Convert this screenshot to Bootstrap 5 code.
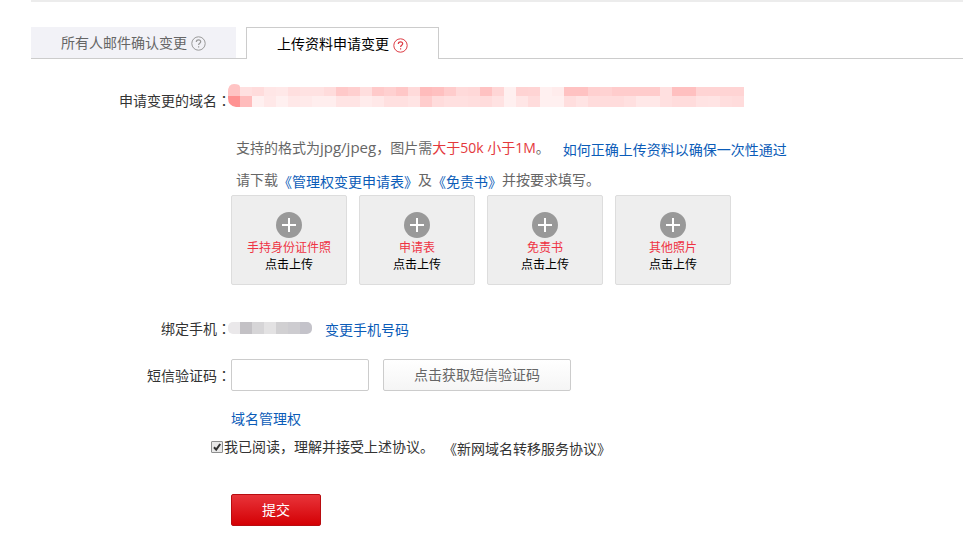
<!DOCTYPE html>
<html lang="zh-CN">
<head>
<meta charset="utf-8">
<meta name="viewport" content="width=device-width, initial-scale=1">
<title>域名管理权变更</title>
<link href="https://cdn.jsdelivr.net/npm/bootstrap@5.3.0/dist/css/bootstrap.min.css" rel="stylesheet">
<style>
  body { font-family: "Open Sans", "Noto Sans CJK SC", sans-serif; font-size: 14px; line-height: 20px; color: #333; background: #fff; }
  .page { margin-left: 31px; border-top: 2px solid #ececec; padding-top: 25px; }
  .mode-tabs { border-bottom: 1px solid #ccc; gap: 10px; }
  .mode-tabs .nav-link { height: 31px; padding: 0 30px; border: 0; border-radius: 0; color: #666; background: #f2f2f7; gap: 4px; }
  .mode-tabs .nav-link.active { color: #000; background: #fff; border: 1px solid #ccc; border-bottom: 0; height: 32px; margin-bottom: -1px; padding-top: 1px; }
  .mode-tabs .nav-link.active svg { color: #dd3c45; }
  .mode-tabs svg { color: #999; margin-top: 2px; }
  .domain-row { margin-top: 25px; }
  .files-row { margin-top: 26px; }
  .phone-row { margin-top: 31px; }
  .sms-row { margin-top: 19px; }
  .rights-row { margin-top: 16px; }
  .agree-row { margin-top: 6px; margin-left: 180px; gap: 1px; }
  .submit-row { margin-top: 35px; }
  .field-label { width: 200px; flex: none; text-align: right; }
  .colon { font-family: "Noto Sans CJK TC", sans-serif; }
  a.doc { color: #0b5cb8; text-decoration: none; vertical-align: -2px; }
  a.doc.plain { color: #333; }
  .guide { margin-left: 13px; }
  .hint { color: #666; padding-left: 5px; margin-bottom: 10px; }
  .formats { font-size: 15px; }
  .hot { color: #e4393c; }
  .masked { margin-left: -3px; }
  .uploads { gap: 12px; margin-top: -7px; }
  .upload { width: 116px; height: 90px; padding: 16px 0 0; border: 1px solid #ddd; border-radius: 2px; background: #eee; font-size: 12px; line-height: 17px; color: #000; }
  .upload svg { margin-bottom: 1px; }
  .upload .hot { color: #ee3344; }
  .sms-input { width: 138px; height: 32px; border: 1px solid #ccc; border-radius: 2px; padding: 4px 8px; font-size: 14px; }
  .sms-btn { width: 188px; height: 32px; margin-left: 14px; padding: 0; border: 1px solid #ccc; border-radius: 2px; background: linear-gradient(#fff, #f5f5f5); color: #666; font-size: 14px; line-height: 20px; }
  .offset-field { margin-left: 200px; }
  .agree-box { appearance: none; width: 12px; height: 12px; margin: 0; border: 1px solid #8e8f8f; background: #e9e9e9 url("data:image/svg+xml,%3Csvg xmlns='http://www.w3.org/2000/svg' viewBox='0 0 10 10'%3E%3Cpath d='M2 5.2 4.2 7.6 8.2 2' fill='none' stroke='%23333' stroke-width='2'/%3E%3C/svg%3E") center / 10px no-repeat; border-radius: 1px; }
  .submit-btn { width: 90px; height: 32px; padding: 0; border: 1px solid #b80c10; border-radius: 2px; background: linear-gradient(#e8343a, #d40004); color: #fff; font-size: 14px; line-height: 20px; }
</style>
</head>
<body>
<svg class="d-none" xmlns="http://www.w3.org/2000/svg">
  <symbol id="help" viewBox="0 0 15 15"><circle cx="7.5" cy="7.5" r="6.7" fill="none" stroke="currentColor"/><path d="M5.3 5.9c0-1.4 1-2.1 2.2-2.1s2.2.7 2.2 1.9c0 1.500-2.100 1.600-2.100 3.200M7.600 10.200v1.400" fill="none" stroke="currentColor" stroke-width="1.200"/></symbol>
  <symbol id="plus" viewBox="0 0 26 26"><circle cx="13" cy="13" r="13" fill="#999"/><path d="M13 6v14M6 13h14" stroke="#fff" stroke-width="2"/></symbol>
</svg>
<main class="page">
  <ul class="nav mode-tabs align-items-end">
    <li class="nav-item"><button type="button" class="nav-link d-flex align-items-center">所有人邮件确认变更<svg width="15" height="15" aria-hidden="true"><use href="#help"/></svg></button></li>
    <li class="nav-item"><button type="button" class="nav-link active d-flex align-items-center">上传资料申请变更<svg width="15" height="15" aria-hidden="true"><use href="#help"/></svg></button></li>
  </ul>

  <form>
    <div class="domain-row d-flex align-items-end">
      <span class="field-label">申请变更的域名<span class="colon" lang="zh-TW">：</span></span>
      <svg id="domainMask" class="masked" width="516" height="27" shape-rendering="crispEdges" role="img" aria-label="已隐藏的域名"><defs><clipPath id="domainClip"><path d="M0 8Q0 0 6 0T12 3H516V23H8Q0 22 0 14Z"/></clipPath></defs><g clip-path="url(#domainClip)"></g></svg>
    </div>

    <div class="files-row offset-field">
      <p class="hint">支持的格式为<span class="formats">jpg/jpeg</span>，图片需<span class="hot">大于50k 小于1M</span>。<a class="doc guide" href="#">如何正确上传资料以确保一次性通过</a></p>
      <p class="hint">请下载<a class="doc" href="#">《管理权变更申请表》</a>及<a class="doc" href="#">《免责书》</a>并按要求填写。</p>
      <div class="d-flex flex-wrap uploads">
        <button type="button" class="upload d-flex flex-column align-items-center"><svg width="26" height="26" aria-hidden="true"><use href="#plus"/></svg><span class="hot">手持身份证件照</span><span>点击上传</span></button>
        <button type="button" class="upload d-flex flex-column align-items-center"><svg width="26" height="26" aria-hidden="true"><use href="#plus"/></svg><span class="hot">申请表</span><span>点击上传</span></button>
        <button type="button" class="upload d-flex flex-column align-items-center"><svg width="26" height="26" aria-hidden="true"><use href="#plus"/></svg><span class="hot">免责书</span><span>点击上传</span></button>
        <button type="button" class="upload d-flex flex-column align-items-center"><svg width="26" height="26" aria-hidden="true"><use href="#plus"/></svg><span class="hot">其他照片</span><span>点击上传</span></button>
      </div>
    </div>

    <div class="phone-row d-flex align-items-center">
      <span class="field-label">绑定手机<span class="colon" lang="zh-TW">：</span></span>
      <svg class="masked" width="84" height="14" shape-rendering="crispEdges" role="img" aria-label="已隐藏的手机号"><defs><clipPath id="phoneClip"><rect y="1" width="84" height="12" rx="5"/></clipPath></defs><g clip-path="url(#phoneClip)"><path fill="#eae8ea" d="M0 0h12v14H0z"/><path fill="#c3c1c5" d="M12 0h12v14H12z"/><path fill="#d6d5d7" d="M24 0h12v14H24z"/><path fill="#e3e2e3" d="M36 0h12v14H36z"/><path fill="#d1d0d2" d="M48 0h12v14H48z"/><path fill="#cdccd0" d="M60 0h12v14H60z"/><path fill="#c4c3ca" d="M72 0h12v14H72z"/></g></svg>
      <a class="doc guide pt-1" href="#">变更手机号码</a>
    </div>

    <div class="sms-row d-flex align-items-center">
      <label class="field-label" for="sms">短信验证码<span class="colon" lang="zh-TW">：</span></label>
      <input id="sms" class="sms-input" type="text">
      <button type="button" class="sms-btn">点击获取短信验证码</button>
    </div>

    <div class="rights-row offset-field"><a class="doc" href="#">域名管理权</a></div>
    <div class="agree-row d-flex align-items-center">
      <input id="agree" class="agree-box" type="checkbox" checked>
      <label for="agree">我已阅读，理解并接受上述协议。</label>
      <a class="doc plain ms-2 pt-1" href="#">《新网域名转移服务协议》</a>
    </div>
    <div class="submit-row offset-field"><button type="submit" class="submit-btn">提交</button></div>
  </form>
</main>
<script src="https://cdn.jsdelivr.net/npm/bootstrap@5.3.0/dist/js/bootstrap.bundle.min.js"></script>
<script>
  // Tints of the masked domain: two rows of 12px cells.
  const rows = [
    { y: 0, h: 12, c: 'c4 e0 dc e6 e8 df e2 e2 dc c9 cf de ca d0 c7 da bc c0 cc da d8 c2 d6 f0 d3 d4 f0 ec c2 c2 d0 d2 cc cc cc cc e0 c0 c0 d4 d4 d4 d4' },
    { y: 12, h: 11, c: '92 bc f0 e8 f0 e8 ea ee ee e4 e4 ec e8 e0 e0 e4 cd dc e0 e0 de dc e2 f0 e6 dc f0 f0 de e4 dc dc dc e0 e8 e8 e0 dc dc e3 e4 de dc' }
  ];
  const g = document.querySelector('#domainMask g');
  rows.forEach(r => r.c.split(' ').forEach((t, i) => {
    const cell = document.createElementNS('http://www.w3.org/2000/svg', 'rect');
    cell.setAttribute('x', i * 12);
    cell.setAttribute('y', r.y);
    cell.setAttribute('width', 12);
    cell.setAttribute('height', r.h);
    cell.setAttribute('fill', '#ff' + t + t);
    g.appendChild(cell);
  }));
</script>
</body>
</html>
